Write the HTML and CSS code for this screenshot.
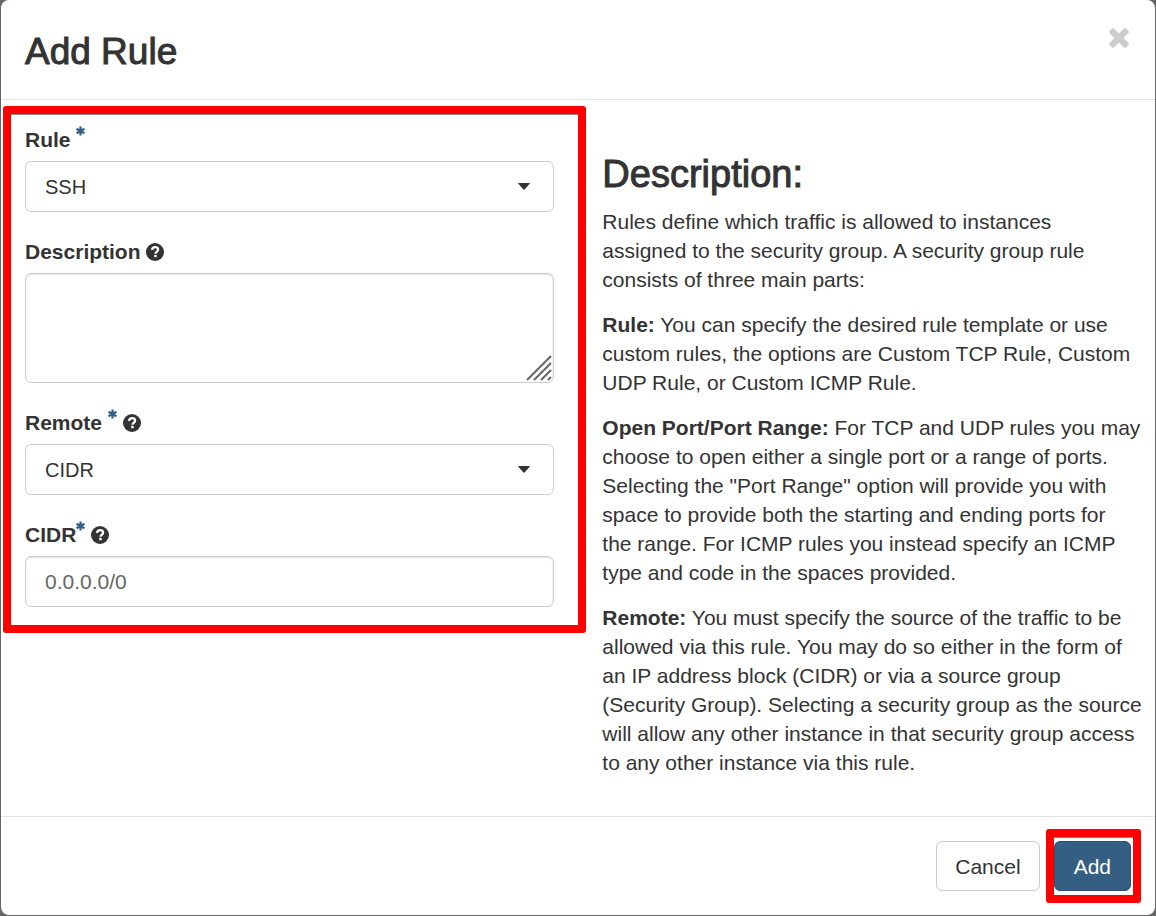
FILE: index.html
```html
<!DOCTYPE html>
<html lang="en">
<head>
<meta charset="utf-8">
<title>Add Rule</title>
<link rel="stylesheet" href="styles.css">
</head>
<body>
<svg class="sprite" aria-hidden="true">
  <symbol id="asterisk" viewBox="1 1 16 16">
    <path d="M9 1v16M2 5l14 8M2 13l14-8" fill="none" stroke="currentColor" stroke-width="4"/>
  </symbol>
  <symbol id="help" viewBox="0 0 18 18">
    <circle cx="9" cy="9" r="9" fill="currentColor"/>
    <path d="M6 6.900C6.300 5 7.400 4.200 9.100 4.200c1.800 0 3 1 3 2.500 0 2-2.600 2.100-2.600 4" fill="none" stroke="#fff" stroke-width="2.300"/>
    <rect x="8.200" y="11.900" width="2.500" height="2.300" fill="#fff"/>
  </symbol>
  <symbol id="caret" viewBox="0 0 12 7">
    <path d="M.6 0h10.800q.9 0 .3.800L6.800 6.300q-.8.900-1.600 0L.3.800Q-.3 0 .6 0z" fill="currentColor"/>
  </symbol>
</svg>
<div class="modal" role="dialog" aria-labelledby="title">
  <header class="modal-header">
    <h1 class="heading title" id="title">Add Rule</h1>
    <button class="close" type="button" aria-label="Close">
      <svg class="close-icon" viewBox="0 0 20 20"><path d="M5 .5L10 5.500l5-5q1-.9 2 0l2.500 2.500q.9 1 0 2L14.500 10l5 5q.9 1 0 2L17 19.500q-1 .9-2 0L10 14.500l-5 5q-1 .9-2 0L.5 17q-.9-1 0-2l5-5L.5 5q-.9-1 0-2L3 .5q1-.9 2 0z" fill="currentColor"/></svg>
    </button>
  </header>
  <div class="modal-body">
    <form class="fields marked" id="rule-form">
      <div class="group">
        <label class="label" for="rule">Rule <svg class="required"><use href="#asterisk"/></svg></label>
        <div class="control">
          <select class="field" id="rule"><option>SSH</option></select>
          <svg class="caret"><use href="#caret"/></svg>
        </div>
      </div>
      <div class="group">
        <label class="label" for="description">Description <svg class="help"><use href="#help"/></svg></label>
        <div class="control">
          <textarea class="field area" id="description"></textarea>
          <svg class="grip" viewBox="0 0 26 26"><path d="M1 25L25 1M8 25L25 8M15 25l10-10M22 25l3-3" stroke="currentColor" stroke-width="2"/></svg>
        </div>
      </div>
      <div class="group">
        <label class="label" for="remote">Remote <svg class="required"><use href="#asterisk"/></svg> <svg class="help"><use href="#help"/></svg></label>
        <div class="control">
          <select class="field" id="remote"><option>CIDR</option></select>
          <svg class="caret"><use href="#caret"/></svg>
        </div>
      </div>
      <div class="group">
        <label class="label" for="cidr">CIDR<svg class="required"><use href="#asterisk"/></svg> <svg class="help"><use href="#help"/></svg></label>
        <input class="field" id="cidr" type="text" placeholder="0.0.0.0/0">
      </div>
    </form>
    <section class="info">
      <h2 class="heading">Description:</h2>
      <p class="text">Rules define which traffic is allowed to instances<br> assigned to the security group. A security group rule consists of three main parts:</p>
      <p class="text"><strong>Rule:</strong> You can specify the desired rule template or use custom rules, the options are Custom TCP Rule, Custom UDP Rule, or Custom ICMP Rule.</p>
      <p class="text"><strong>Open Port/Port Range:</strong> For TCP and UDP rules you may choose to open either a single port or a range of ports. Selecting the "Port Range" option will provide you with space to provide both the starting and ending ports for<br> the range. For ICMP rules you instead specify an ICMP type and code in the spaces provided.</p>
      <p class="text"><strong>Remote:</strong> You must specify the source of the traffic to be allowed via this rule. You may do so either in the form of an IP address block (CIDR) or via a source group (Security Group). Selecting a security group as the source will allow any other instance in that security group access to any other instance via this rule.</p>
    </section>
  </div>
  <footer class="modal-footer">
    <button class="button cancel" type="button">Cancel</button>
    <div class="submit marked"><button class="button primary" type="submit" form="rule-form">Add</button></div>
  </footer>
</div>
</body>
</html>
```
FILE: styles.css
```css
* {
  box-sizing: border-box;
}

body {
  margin: 0;
  padding: 0 1px 1px;
  background: #666;
  color: #333;
  font: 21px/29px "Helvetica Neue", "Liberation Sans", Arial, sans-serif;
}

.sprite {
  display: none;
}

.modal {
  background: #fff;
  border-radius: 8px;
}

.modal-header {
  display: flex;
  justify-content: space-between;
  align-items: flex-start;
  padding: 28px 26px 24px 24px;
  border-bottom: 1px solid #e3e3e3;
}

.heading {
  margin: 0;
  font-size: 38px;
  font-weight: 400;
  line-height: 47px;
  -webkit-text-stroke: 1px #333;
}

.title {
  font-size: 37px;
}

.close {
  display: flex;
  padding: 0;
  border: 0;
  background: none;
  color: #ccc;
}

.close-icon {
  width: 20px;
  height: 20px;
}

.modal-body {
  display: grid;
  grid-template-columns: minmax(0, 14fr) minmax(0, 13fr);
  column-gap: 16px;
  align-items: start;
  padding: 6px 11px 39px 2px;
}

.marked {
  border: 8px solid #f00;
  border-radius: 3px;
  box-shadow: inset 0 1px 0 #888;
}

.fields {
  display: flex;
  flex-direction: column;
  gap: 25px;
  padding: 11px 24px 18px 14px;
}

.group {
  display: flex;
  flex-direction: column;
  gap: 7px;
}

.label {
  height: 29px;
  font-weight: 700;
}

.required {
  width: 9px;
  height: 10px;
  color: #325d88;
  vertical-align: 11px;
}

.help {
  width: 18px;
  height: 18px;
  vertical-align: -2px;
}

.control {
  position: relative;
  display: flex;
}

.field {
  width: 100%;
  height: 51px;
  padding: 0 19px;
  border: 1px solid #ccc;
  border-radius: 6px;
  background: #fff;
  color: #333;
  font: inherit;
  appearance: none;
}

select.field {
  padding-top: 2px;
  font-size: 20px;
}

input.field,
.area {
  box-shadow: inset 0 1px 2px rgba(0, 0, 0, 0.12);
}

.field::placeholder {
  color: #666;
}

.area {
  height: 110px;
  padding: 10px 19px;
  resize: none;
}

.caret {
  position: absolute;
  top: 22px;
  right: 24px;
  width: 12px;
  height: 7px;
  pointer-events: none;
}

.grip {
  position: absolute;
  right: 2px;
  bottom: 2px;
  width: 26px;
  height: 26px;
  color: #666;
  pointer-events: none;
}

.info {
  padding-top: 45px;
}

.text {
  margin: 9px 0 16px;
}

.text + .text {
  margin-top: 0;
}

.text:last-child {
  margin-bottom: 0;
}

.modal-footer {
  display: flex;
  justify-content: flex-end;
  align-items: center;
  gap: 6px;
  padding: 12px 14px;
  border-top: 1px solid #e3e3e3;
}

.button {
  height: 50px;
  padding: 0 19px;
  border: 1px solid #ccc;
  border-radius: 6px;
  background: #fff;
  color: #333;
  font: inherit;
}

.cancel {
  padding: 0 18px;
}

.submit {
  display: flex;
  padding: 4px 2px 4px 0;
}

.primary {
  border-color: #2b5179;
  background: #355e83;
  color: #fff;
}
```
